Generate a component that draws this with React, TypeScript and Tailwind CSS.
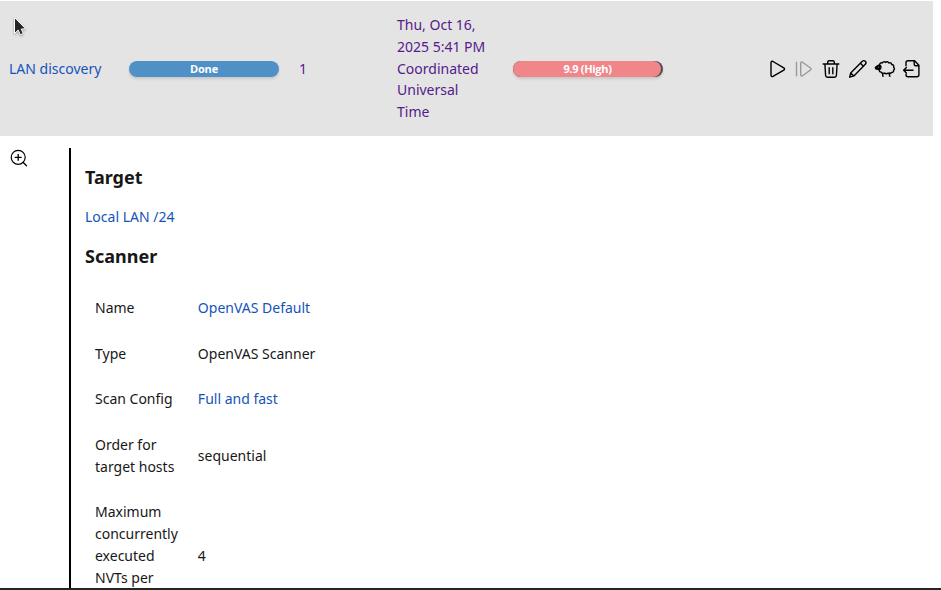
import type { ReactNode } from "react";

const stroke = {
  fill: "none",
  stroke: "currentColor",
  strokeWidth: 1.4,
  strokeLinecap: "round",
  strokeLinejoin: "round",
} as const;

function Icon({ className, children }: { className: string; children: ReactNode }) {
  return (
    <svg width="20" height="20" viewBox="0 0 20 20" className={`shrink-0 ${className}`} {...stroke}>
      {children}
    </svg>
  );
}

function Actions() {
  return (
    <div className="ml-[105px] flex items-center text-black">
      <Icon className="">
        <path d="M3 3.7c0-1.2 1-1.7 2-1.2l10.8 6.3c1 .6 1 1.7 0 2.3L5 17.4c-1 .6-2 0-2-1.1z" />
      </Icon>
      <Icon className="ml-[7px] text-[#999]">
        <path d="M1.5 3.2v13.6M5.7 4.3c0-1.2.9-1.6 1.8-1.1l8 5.8c.8.6.8 1.4 0 2l-8 5.8c-.9.5-1.8.1-1.8-1z" />
      </Icon>
      <Icon className="ml-[6px]">
        <path d="M2.2 5h15.6M6.7 5V3.3c0-1 .6-1.6 1.6-1.6h3.4c1 0 1.6.6 1.6 1.6V5M3.9 5l.7 11.5c.1 1.1.7 1.7 1.8 1.7h7.2c1.1 0 1.7-.6 1.8-1.7L16.1 5M8.2 8.7v6M11.8 8.7v6" />
      </Icon>
      <Icon className="ml-[7px]">
        <path d="m1.7 18.2 1-4.3L14.3 2.3c.9-.9 2.1-.9 3 0s.9 2.1 0 3L5.9 16.9zM12.4 4.3l3 3M2.7 13.9l3.2 3" />
      </Icon>
      <svg width="22" height="20" viewBox="0 0 22 20" className="ml-[6px] shrink-0" {...stroke}>
        <path d="M5.7 6c-.3-1.5 1.1-2.6 2.5-2 .5-1.3 2.3-1.6 3.2-.6.9-1 2.7-.8 3.3.5 1.3-.6 2.9.2 3 1.6 1.7.1 2.5 1.4 1.9 2.7 1.1.8 1.1 2.3 0 3 .3 1.6-.8 2.5-2.2 2.2-.6 1.4-2.4 1.7-3.4.6-.9 1-2.7 1-3.4 0-1.3 1-3.3.5-3.6-1.1-1.4.1-2-1-1.7-2.4M8.7 14v3.1M15.5 14v3.1M8.7 17.1h.6M15.5 17.1h.6" />
        <path d="M6.5 6.6 4.6 6.2 1.7 8c-.5.5-.2 1.9.5 2l3.5.5c1.3-.6 1.6-2.4.8-3.9z" fill="currentColor" />
        <path d="M4.3 8.2h.1" stroke="#999" strokeWidth="1" />
      </svg>
      <Icon className="ml-[6px]">
        <path d="M4 6.8V3.7c0-1.2.8-2 2-2h6.6l4.3 4.5v9.6c0 1.2-.8 2-2 2H6c-1.2 0-2-.8-2-2v-.7M12.2 1.9v3.4c0 1 .5 1.5 1.5 1.5h3.1M11 11.3H1.6m2.8-2.8L1.6 11.3l2.8 2.8" />
      </Icon>
    </div>
  );
}

function Row({ label, children }: { label: ReactNode; children: ReactNode }) {
  return (
    <tr>
      <td className="py-3 pr-5 pl-[10px] align-middle">{label}</td>
      <td className="py-3 align-middle">{children}</td>
    </tr>
  );
}

export default function App() {
  return (
    <div className="relative flex h-[590px] w-[941px] flex-col overflow-hidden border-b-2 border-[#252526] bg-white pt-px font-['Noto_Sans',sans-serif] text-[14px] leading-[21.7px] text-[#171717]">
      <div className="flex h-[135px] w-[933px] shrink-0 items-center bg-[#e4e4e4]">
        <a className="ml-[9px] w-[120px] whitespace-nowrap text-[#1454b9]">LAN discovery</a>
        <div className="mt-px flex h-4 w-[150px] items-center justify-center rounded-full bg-[#4f91c7] font-['Open_Sans',sans-serif] text-[11px] leading-4 font-bold tracking-[-0.2px] text-white shadow-[0_2px_3px_rgba(0,0,0,0.13)]">
          Done
        </div>
        <a className="ml-5 w-[98px] text-[#551a8b]">1</a>
        <a className="w-[116px] text-[#551a8b]">
          Thu, Oct 16,<br />2025 5:41 PM<br />Coordinated<br />Universal<br />Time
        </a>
        <div className="mt-px h-4 w-[150px] overflow-hidden rounded-full bg-[#4c4c4c] shadow-[0_2px_3px_rgba(0,0,0,0.13)]">
          <div className="flex h-4 w-[148px] items-center justify-center rounded-r-full bg-[#f0868a] pl-px font-['Open_Sans',sans-serif] text-[11px] leading-4 font-bold tracking-[-0.3px] text-white">
            9.9 (High)
          </div>
        </div>
        <Actions />
      </div>

      <div className="flex min-h-0 grow overflow-hidden pt-3">
        <div className="w-[69px] shrink-0 pl-[9px]">
          <Icon className="text-black">
            <circle cx="9.2" cy="9.3" r="7" strokeWidth="1.2" />
            <path d="M9.2 6.3v6M6.2 9.3h6M14.3 14.5l3.2 3.2" strokeWidth="1.3" />
          </Icon>
        </div>
        <div className="grow border-l-2 border-black pl-[14px]">
          <h2 className="mt-[15px] text-[18px] leading-[28px] font-bold">Target</h2>
          <a className="mt-[15px] block text-[#1454b9]">Local LAN /24</a>
          <h2 className="mt-[14px] text-[18px] leading-[28px] font-bold">Scanner</h2>
          <table className="mt-[15.2px] border-collapse">
            <tbody>
              <Row label="Name"><a className="text-[#1454b9]">OpenVAS Default</a></Row>
              <Row label="Type">OpenVAS Scanner</Row>
              <Row label="Scan Config"><a className="text-[#1454b9]">Full and fast</a></Row>
              <Row label={<>Order for<br />target hosts</>}>sequential</Row>
              <tr>
                <td className="pt-3 pr-5 pl-[10px] align-top">
                  Maximum<br />concurrently<br />executed<br />NVTs per
                </td>
                <td className="pt-[55.4px] align-top">4</td>
              </tr>
            </tbody>
          </table>
        </div>
      </div>

      <svg width="16" height="22" viewBox="0 0 16 22" className="absolute top-4 left-3 drop-shadow-[0_1px_1px_rgba(0,0,0,0.35)]">
        <path d="M2.5 1.5v16l3.7-3.4 2.1 4.7 3-1.3-2.1-4.4 4.4-.4z" fill="#252525" stroke="#fff" strokeWidth="1" />
      </svg>
    </div>
  );
}
